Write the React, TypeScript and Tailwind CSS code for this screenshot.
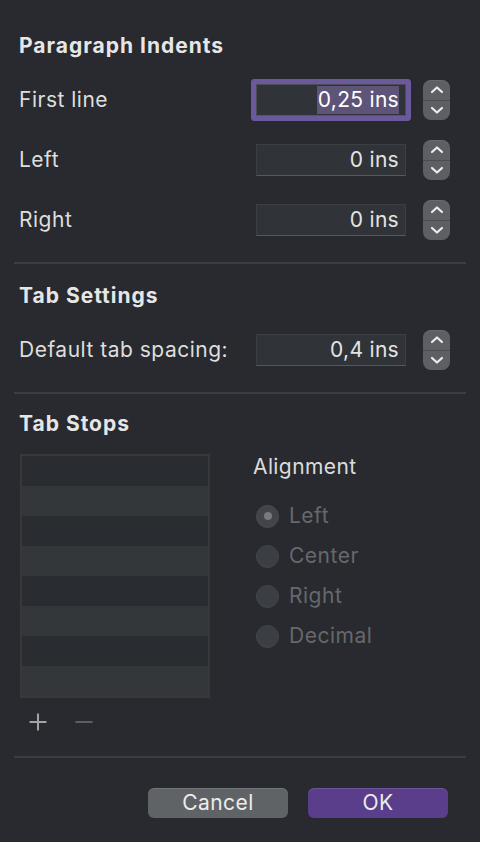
import React from "react";

function Stepper() {
  return (
    <div className="ml-[17px] flex h-[40px] w-[27px] flex-col overflow-hidden rounded-[8px] bg-[#5d5f64] shadow-[inset_0_1px_0_rgba(255,255,255,0.08)]">
      <div className="flex flex-1 items-center justify-center border-b border-[#4a4c51]">
        <svg width="14" height="9" viewBox="0 0 14 9" fill="none">
          <path d="M2 7L7 2.5L12 7" stroke="#ececec" strokeWidth="2.2" strokeLinecap="round" strokeLinejoin="round" />
        </svg>
      </div>
      <div className="flex flex-1 items-center justify-center">
        <svg width="14" height="9" viewBox="0 0 14 9" fill="none">
          <path d="M2 2L7 6.5L12 2" stroke="#ececec" strokeWidth="2.2" strokeLinecap="round" strokeLinejoin="round" />
        </svg>
      </div>
    </div>
  );
}

function Field({ value, focused }: { value: string; focused?: boolean }) {
  return (
    <div
      className={
        "flex h-[32px] w-[150px] items-center justify-end border border-[#3b3e42] border-b-[#55585c] bg-[#303337] pr-[6px] text-[21px] tracking-[0.3px] text-[#e4e4e4] " +
        (focused ? "rounded-[1px] shadow-[0_0_0_5px_#6b5a9b] border-[#4b4d52]" : "")
      }
    >
      {focused ? (
        <span className="flex h-[28px] items-center bg-[#5e5379] pl-[1px] text-white">{value}</span>
      ) : (
        <span>{value}</span>
      )}
    </div>
  );
}

function Row({ label, value, focused }: { label: string; value: string; focused?: boolean }) {
  return (
    <div className="flex h-[40px] items-center">
      <div className="w-[237px] text-[21px] tracking-[0.5px] text-[#dedede]">{label}</div>
      <Field value={value} focused={focused} />
      <Stepper />
    </div>
  );
}

function Radio({ label, checked }: { label: string; checked?: boolean }) {
  return (
    <div className="flex h-[40px] items-center">
      <div
        className={
          "flex h-[23px] w-[23px] items-center justify-center rounded-full border " +
          (checked ? "border-[#4a4d51] bg-[#414448]" : "border-[#43464a] bg-[#3b3e42]")
        }
      >
        {checked && <div className="h-[8px] w-[8px] rounded-full bg-[#77797d]" />}
      </div>
      <span className="ml-[10px] text-[21px] tracking-[0.5px] text-[#66686d]">{label}</span>
    </div>
  );
}

export default function App() {
  const rows = [0, 1, 2, 3, 4, 5, 6, 7];
  return (
    <div
      className="h-[842px] w-[480px] overflow-hidden bg-[#282a2f] px-[14px] pt-[32px]"
      style={{ fontFamily: "Inter, 'Liberation Sans', sans-serif" }}
    >
      <div className="pl-[5px]">
        <div className="flex h-[28px] items-center text-[21px] font-bold tracking-[1px] text-[#e6e6e6]">Paragraph Indents</div>
        <div className="mt-[20px] flex flex-col gap-[20px]">
          <Row label="First line" value="0,25 ins" focused />
          <Row label="Left" value="0 ins" />
          <Row label="Right" value="0 ins" />
        </div>
      </div>
      <div className="mt-[22px] h-[2px] bg-[#3b3d42]" />

      <div className="pl-[5px]">
        <div className="mt-[18px] flex h-[28px] items-center text-[21px] font-bold tracking-[1px] text-[#e6e6e6]">Tab Settings</div>
        <div className="mt-[20px]">
          <Row label="Default tab spacing:" value="0,4 ins" />
        </div>
      </div>
      <div className="mt-[22px] h-[2px] bg-[#3b3d42]" />

      <div className="pl-[5px]">
        <div className="mt-[16px] flex h-[28px] items-center text-[21px] font-bold tracking-[1px] text-[#e6e6e6]">Tab Stops</div>
        <div className="mt-[16px] flex">
          <div>
            <div className="ml-[1px] w-[190px] border-2 border-[#37383a]">
              {rows.map((r) => (
                <div key={r} className={"h-[30px] " + (r % 2 === 0 ? "bg-[#292c30]" : "bg-[#33373a]")} />
              ))}
            </div>
            <div className="mt-[15px] flex h-[18px] items-center pl-[10px]">
              <svg width="18" height="18" viewBox="0 0 18 18">
                <path d="M9 0.5V17.5M0.5 9H17.5" stroke="#a3a3a3" strokeWidth="2" />
              </svg>
              <svg className="ml-[28px]" width="18" height="18" viewBox="0 0 18 18">
                <path d="M0.5 9H17.5" stroke="#5c5e62" strokeWidth="2" />
              </svg>
            </div>
          </div>
          <div className="ml-[43px] -mt-[1px]">
            <div className="flex h-[28px] items-center text-[21px] tracking-[0.4px] text-[#dcdcdc]">Alignment</div>
            <div className="mt-[15px] flex flex-col pl-[3px]">
              <Radio label="Left" checked />
              <Radio label="Center" />
              <Radio label="Right" />
              <Radio label="Decimal" />
            </div>
          </div>
        </div>
      </div>
      <div className="mt-[25px] h-[2px] bg-[#3b3d42]" />

      <div className="mt-[30px] flex justify-end gap-[20px] pr-[18px]">
        <button className="flex h-[30px] w-[140px] items-center justify-center rounded-[6px] bg-[#606366] text-[21px] tracking-[0.4px] text-[#ececec] shadow-[inset_0_1px_0_rgba(255,255,255,0.12)]">
          Cancel
        </button>
        <button className="flex h-[30px] w-[140px] items-center justify-center rounded-[6px] bg-[#5a3e8b] text-[21px] tracking-[0.4px] text-[#ececec] shadow-[inset_0_1px_0_rgba(255,255,255,0.12)]">
          OK
        </button>
      </div>
    </div>
  );
}
